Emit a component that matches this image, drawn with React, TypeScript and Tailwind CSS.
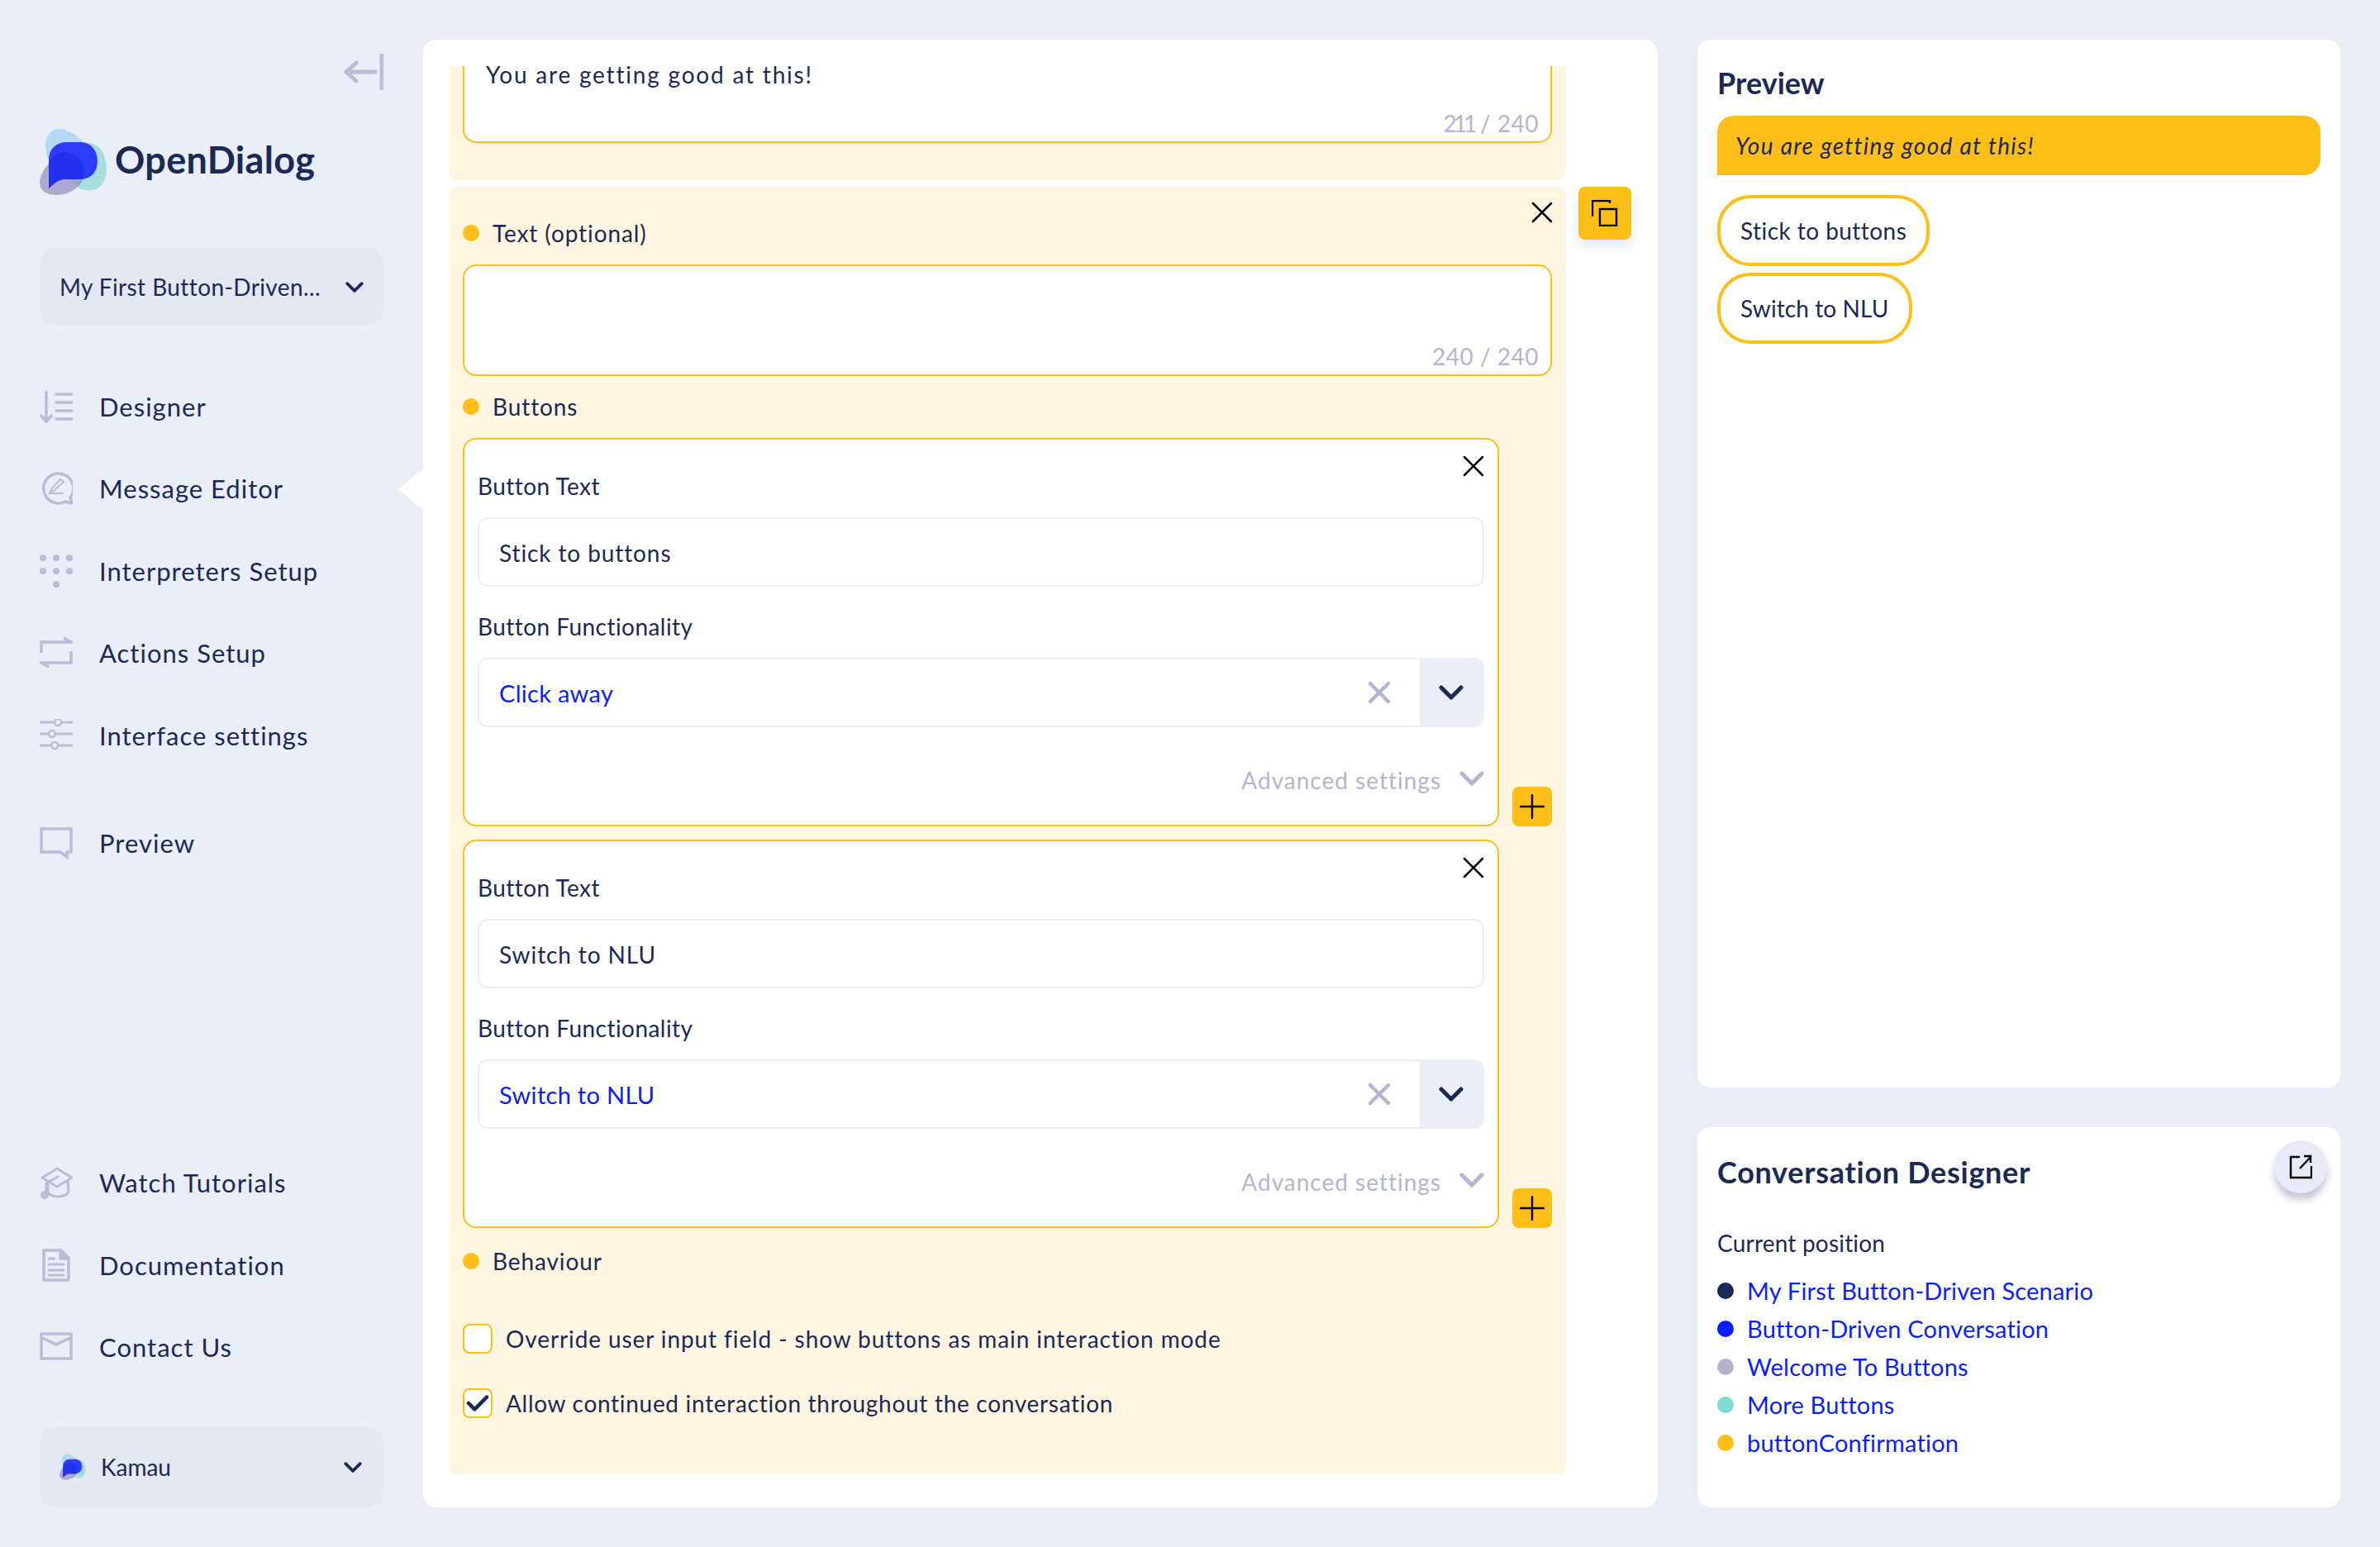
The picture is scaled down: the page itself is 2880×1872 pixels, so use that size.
import { X } from "lucide-react";
import type { ReactNode } from "react";

function Chevron({ className }: { className: string }) {
  return (
    <svg viewBox="0 0 30 20" className={className} fill="none" stroke="currentColor" strokeWidth="5" strokeLinecap="round" strokeLinejoin="round">
      <path d="M3 4l12 12L27 4" />
    </svg>
  );
}

function Logo({ className }: { className: string }) {
  return (
    <svg viewBox="48 155 82 82" className={className}>
      <path d="M55 178C54 163 64 153 78 157C92 161 104 172 107 188C109 198 100 204 86 204C66 204 56 196 55 178Z" fill="#b5d8f8" />
      <path d="M90 174C104 171 120 172 125 186C131 200 131 220 118 228C104 234 90 228 84 214C79 200 80 180 90 174Z" fill="#a6dede" />
      <path d="M70 190C84 182 100 190 102 208C103 224 86 236 68 236C52 236 44 226 50 212C54 202 60 196 70 190Z" fill="#8f8ebd" fillOpacity="0.7" />
      <path d="M59 228V194C59 180 68 172 82 172H97C110 172 118 182 118 195C118 208 110 217 97 217H78C70 217 66 222 59 228Z" fill="#2f3bfb" />
      <path d="M59 200C60 190 68 184 78 184C92 184 102 194 102 208C102 211 101 214 100 217H78C70 217 66 222 59 228Z" fill="#2430ee" />
    </svg>
  );
}

const iconProps = {
  viewBox: "0 0 40 40",
  className: "w-[40px] h-[40px] shrink-0 text-[#bfbbd6]",
  fill: "none",
  stroke: "currentColor",
  strokeWidth: 3.5,
  strokeLinecap: "round" as const,
};

const DesignerIcon = () => (
  <svg {...iconProps}>
    <path d="M8 2v35M2 31l6 7 6-7M20 5h19M20 15h19M20 25h19M20 35h19" />
  </svg>
);
const MessageIcon = () => (
  <svg {...iconProps}>
    <path d="M39 38l-8-2a18 18 0 1 1 6-5z" strokeLinejoin="round" />
    <path d="M11 26h17M14 21l11-12 4 3-12 11-4 1z" strokeWidth="2" />
  </svg>
);
const DotsIcon = () => (
  <svg {...iconProps} fill="currentColor" stroke="none">
    <circle cx="4" cy="4" r="4" />
    <circle cx="20" cy="4" r="4" />
    <circle cx="36" cy="4" r="4" />
    <circle cx="4" cy="20" r="4" />
    <circle cx="20" cy="20" r="4" />
    <circle cx="36" cy="20" r="4" />
    <circle cx="20" cy="36" r="4" />
  </svg>
);
const ActionsIcon = () => (
  <svg {...iconProps} strokeLinecap="butt">
    <path d="M2 20V7h36L29 2M38 18v14H2l9 5" />
  </svg>
);
const SettingsIcon = () => (
  <svg {...iconProps} strokeWidth="3">
    <path d="M0 4h18M28 4h2M33 4h7M0 18h10M20 18h20M0 32h13M23 32h4M28 32h12" />
    <circle cx="22" cy="4" r="4" strokeWidth="2.5" />
    <circle cx="15" cy="18" r="4" strokeWidth="2.5" />
    <circle cx="18" cy="32" r="4" strokeWidth="2.5" />
  </svg>
);
const PreviewIcon = () => (
  <svg {...iconProps} strokeLinecap="butt">
    <path d="M2 3h36v28h-5v6l-8-6H2z" />
  </svg>
);
const CapIcon = () => (
  <svg {...iconProps} strokeWidth="3" strokeLinejoin="round">
    <path d="M3 14L21 3l18 11-18 11z" />
    <path d="M10 19v10c0 5 5 8 12 8s13-3 13-7l-1-11" />
    <path d="M22 13L8 21v11" />
    <circle cx="6" cy="35" r="3.5" fill="currentColor" />
  </svg>
);
const DocIcon = () => (
  <svg {...iconProps} strokeLinecap="butt" strokeLinejoin="round">
    <path d="M5 2h21l9 9v27H5z" />
    <path d="M25 2v10h10" fill="currentColor" />
    <path d="M10 12h9M10 19h20M10 26h20M10 32h20" strokeWidth="3" />
  </svg>
);
const MailIcon = () => (
  <svg {...iconProps} strokeLinecap="butt">
    <path d="M2 4h36v30H2zM3 9l17 8 17-8" />
  </svg>
);

function NavRow({ icon, label, className = "" }: { icon: ReactNode; label: string; className?: string }) {
  return (
    <div className={`flex items-center gap-[32px] h-[99.5px] text-[31px] tracking-[1px] text-[#1b2956] ${className}`}>
      {icon}
      <span>{label}</span>
    </div>
  );
}

function SectionLabel({ children }: { children: ReactNode }) {
  return (
    <div className="flex items-center gap-[16px] h-[28px] text-[28px] tracking-[0.9px] text-[#1b2956]">
      <span className="w-[20px] h-[20px] rounded-full bg-[#ffbe18]" />
      <span>{children}</span>
    </div>
  );
}

function ButtonCard({ text, action }: { text: string; action: string }) {
  return (
    <div className="flex gap-[16px]">
      <div className="relative w-[1254px] h-[470px] rounded-[16px] border-2 border-[#ffbe18] bg-white px-[16px] pt-[42px] text-[#1b2956]">
        <X className="absolute top-[10px] right-[7px] w-[44px] h-[44px] text-black" strokeWidth={1.4} />
        <div className="h-[28px] leading-[28px] text-[28px] tracking-[0.45px]">Button Text</div>
        <div className="mt-[24px] h-[84px] rounded-[12px] border-2 border-[#eaeef9] pl-[24px] pt-[2px] flex items-center text-[28px] tracking-[0.9px]">
          {text}
        </div>
        <div className="mt-[34px] h-[28px] leading-[28px] text-[28px] tracking-[0.45px]">Button Functionality</div>
        <div className="mt-[24px] h-[84px] rounded-[12px] border-2 border-[#eaeef9] flex items-center overflow-hidden">
          <span className="flex-1 pl-[24px] pt-[2px] text-[29px] tracking-[0.3px] text-[#0a1eff]">{action}</span>
          <X className="w-[44px] h-[44px] mr-[27px] text-[#b4b4d0]" strokeWidth={2.4} />
          <span className="w-[76px] h-full bg-[#eaeef9] flex items-center justify-center text-[#1b2956]">
            <Chevron className="w-[30px] h-[20px]" />
          </span>
        </div>
        <div className="mt-[50px] h-[28px] flex items-center justify-end text-[28px] tracking-[1px] text-[#b4b4d0]">
          <span>Advanced settings</span>
          <Chevron className="w-[30px] h-[20px] ml-[22px] -mt-[4px]" />
        </div>
      </div>
      <div className="self-end w-[48px] h-[48px] rounded-[8px] bg-[#ffbe18] flex items-center justify-center">
        <svg viewBox="0 0 30 30" className="w-[30px] h-[30px]" fill="none" stroke="black" strokeWidth="2.4" strokeLinecap="round">
          <path d="M15 1v28M1 15h28" />
        </svg>
      </div>
    </div>
  );
}

const crumbs = [
  { label: "My First Button-Driven Scenario", dot: "bg-[#1b2956]" },
  { label: "Button-Driven Conversation", dot: "bg-[#0a1eff]" },
  { label: "Welcome To Buttons", dot: "bg-[#b4b4d0]" },
  { label: "More Buttons", dot: "bg-[#7edcd0]" },
  { label: "buttonConfirmation", dot: "bg-[#ffbe18]" },
];

export default function App() {
  return (
    <div className="flex w-[2880px] h-[1872px] bg-[#eaeef9] font-['Lato',sans-serif] text-[#1b2956]">
      {/* Sidebar */}
      <aside className="relative w-[512px] shrink-0 px-[48px] pb-[48px] flex flex-col">
        <div className="h-[65px] shrink-0" />
        <div className="flex justify-end h-[44px] shrink-0">
          <svg viewBox="0 0 48 44" className="w-[48px] h-[44px]" fill="none" stroke="#bfbbd6" strokeWidth="5" strokeLinecap="round" strokeLinejoin="round">
            <path d="M46 2v40M38 22H3M15 11L3 22l12 11" />
          </svg>
        </div>
        <div className="mt-[46px] flex items-center h-[82px] shrink-0">
          <Logo className="w-[82px] h-[82px]" />
          <span className="ml-[9px] -mt-[4px] text-[45px] font-bold tracking-[0.3px] text-[#1b2956]">OpenDialog</span>
        </div>
        <div className="mt-[63px] h-[94px] shrink-0 rounded-[20px] bg-[#e4e8f2] pl-[24px] pr-[24px] flex items-center justify-between text-[28px] tracking-[0.4px]">
          <span>My First Button-Driven...</span>
          <Chevron className="w-[22px] h-[15px]" />
        </div>
        <div className="mt-[48px]">
          <NavRow icon={<DesignerIcon />} label="Designer" />
          <NavRow icon={<MessageIcon />} label="Message Editor" />
          <NavRow icon={<DotsIcon />} label="Interpreters Setup" />
          <NavRow icon={<ActionsIcon />} label="Actions Setup" />
          <NavRow icon={<SettingsIcon />} label="Interface settings" />
          <NavRow icon={<PreviewIcon />} label="Preview" className="mt-[31px]" />
        </div>
        <div className="mt-auto">
          <NavRow icon={<CapIcon />} label="Watch Tutorials" />
          <NavRow icon={<DocIcon />} label="Documentation" />
          <NavRow icon={<MailIcon />} label="Contact Us" />
        </div>
        <div className="mt-[46px] h-[98px] shrink-0 rounded-[20px] bg-[#e4e8f2] pl-[24px] pr-[26px] flex items-center text-[28px]">
          <Logo className="w-[32px] h-[32px]" />
          <span className="ml-[18px] flex-1">Kamau</span>
          <Chevron className="w-[22px] h-[15px]" />
        </div>
        {/* active page pointer */}
        <span className="absolute right-0 top-[567px] w-0 h-0 border-y-[25px] border-y-transparent border-r-[30px] border-r-white" />
      </aside>

      {/* Message editor */}
      <main className="w-[1494px] shrink-0 my-[48px] rounded-[16px] bg-white pl-[32px] pt-[32px] flex gap-[16px]">
        <div className="w-[1350px] shrink-0">
          {/* previous message, scrolled so only its tail shows */}
          <div className="h-[138px] rounded-b-[8px] bg-[#fff5e0] px-[16px]">
            <div className="relative h-[93px] rounded-b-[16px] border-x-2 border-b-2 border-[#ffbe18] bg-white pl-[26px] text-[28px] leading-[20px] tracking-[1.8px]">
              You are getting good at this!
              <span className="absolute right-[14px] bottom-[1px] leading-[42px] text-[#b4b4d0] tracking-[0.5px]">
                <span className="tracking-[-4px]">211</span> / 240
              </span>
            </div>
          </div>
          <div className="relative mt-[8px] rounded-[8px] bg-[#fff5e0] px-[16px] pt-[42px] pb-[68px]">
            <X className="absolute top-[9px] right-[6px] w-[44px] h-[44px] text-black" strokeWidth={1.4} />
            <SectionLabel>Text (optional)</SectionLabel>
            <div className="relative mt-[24px] h-[135px] w-[1318px] rounded-[16px] border-2 border-[#ffbe18] bg-white text-[28px]">
              <span className="absolute right-[14px] bottom-[1px] text-[#b4b4d0] tracking-[0.5px]">240 / 240</span>
            </div>
            <div className="mt-[23px]">
              <SectionLabel>Buttons</SectionLabel>
            </div>
            <div className="mt-[24px] flex flex-col gap-[16px]">
              <ButtonCard text="Stick to buttons" action="Click away" />
              <ButtonCard text="Switch to NLU" action="Switch to NLU" />
            </div>
            <div className="mt-[26px]">
              <SectionLabel>Behaviour</SectionLabel>
            </div>
            <div className="mt-[62px] flex items-center gap-[16px] h-[36px] text-[28px] tracking-[0.9px]">
              <span className="w-[36px] h-[36px] rounded-[8px] border-2 border-[#ffbe18] bg-white" />
              <span>Override user input field - show buttons as main interaction mode</span>
            </div>
            <div className="mt-[42px] flex items-center gap-[16px] h-[36px] text-[28px] tracking-[0.7px]">
              <span className="w-[36px] h-[36px] rounded-[8px] border-2 border-[#ffbe18] bg-white flex items-center justify-center">
                <svg viewBox="0 0 30 24" className="w-[28px] h-[22px]" fill="none" stroke="#1b2956" strokeWidth="5" strokeLinecap="round" strokeLinejoin="round">
                  <path d="M3 12l8 8L27 4" />
                </svg>
              </span>
              <span>Allow continued interaction throughout the conversation</span>
            </div>
          </div>
        </div>
        <div className="w-[64px] h-[64px] mt-[146px] rounded-[8px] bg-[#ffbe18] shadow-[0_8px_16px_rgba(60,70,140,0.12)] flex items-center justify-center">
          <svg viewBox="0 0 32 32" className="w-[32px] h-[32px]" fill="none" stroke="black" strokeWidth="2.4">
            <path d="M1 20V1h21v3" />
            <rect x="10" y="11" width="20" height="20" />
          </svg>
        </div>
      </main>

      {/* Right column */}
      <div className="w-[778px] shrink-0 mx-[48px] my-[48px] flex flex-col gap-[48px]">
        <section className="h-[1268px] rounded-[16px] bg-white px-[24px] pt-[32px]">
          <h2 className="h-[40px] leading-[40px] text-[36px] font-bold">Preview</h2>
          <div className="mt-[20px] h-[72px] w-[730px] rounded-t-[20px] rounded-br-[20px] bg-[#ffbe18] pl-[22px] flex items-center text-[28px] italic tracking-[1.3px]">
            You are getting good at this!
          </div>
          <div className="mt-[24px] flex flex-col items-start gap-[8px]">
            <div className="h-[86px] rounded-[40px] border-4 border-[#ffbe18] px-[24px] flex items-center text-[28px] tracking-[0.45px]">Stick to buttons</div>
            <div className="h-[86px] rounded-[40px] border-4 border-[#ffbe18] px-[24px] flex items-center text-[28px] tracking-[0.1px]">Switch to NLU</div>
          </div>
        </section>
        <section className="relative h-[460px] rounded-[16px] bg-white px-[24px] pt-[34px]">
          <h2 className="h-[40px] leading-[40px] text-[36px] font-bold tracking-[0.7px]">Conversation Designer</h2>
          <div className="absolute top-[16px] right-[16px] w-[64px] h-[64px] rounded-full bg-[#e8ebf7] shadow-[0_8px_10px_rgba(60,60,120,0.3)] flex items-center justify-center">
            <svg viewBox="0 0 28 30" className="w-[28px] h-[30px]" fill="none" stroke="black" strokeWidth="2.4">
              <path d="M13 3H2v25h25V14M13 17L26 3M18 2h8v8" />
            </svg>
          </div>
          <div className="mt-[50px] h-[32px] leading-[32px] text-[28px] tracking-[0.2px]">Current position</div>
          <ul className="mt-[19px]">
            {crumbs.map((c) => (
              <li key={c.label} className="h-[46px] flex items-center gap-[16px] text-[29px] tracking-[0.2px] text-[#0a1eff]">
                <span className={`w-[20px] h-[20px] rounded-full ${c.dot}`} />
                {c.label}
              </li>
            ))}
          </ul>
        </section>
      </div>
    </div>
  );
}
